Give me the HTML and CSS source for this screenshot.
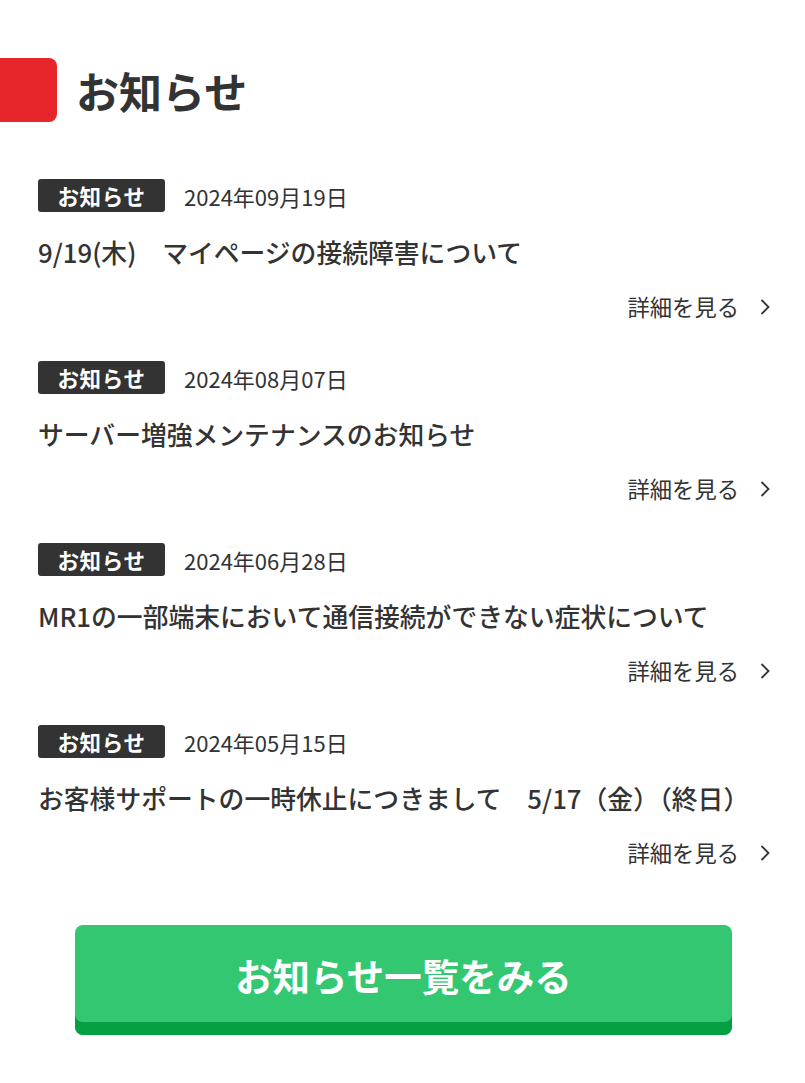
FILE: index.html
```html
<!DOCTYPE html>
<html lang="ja">
<head>
<meta charset="utf-8">
<title>お知らせ</title>
<link rel="stylesheet" href="styles.css">
</head>
<body>
<section class="news">
  <h2 class="news-heading"><span class="heading-mark"></span><span class="heading-text">お知らせ</span></h2>
  <ul class="news-list">
    <li class="news-item">
      <div class="news-meta"><span class="news-tag">お知らせ</span><span class="news-date">2024年09月19日</span></div>
      <p class="news-title">9/19(木)　マイページの接続障害について</p>
      <div class="news-more"><a class="more-link" href="#">詳細を見る<svg class="chev" width="10" height="16" viewBox="0 0 10 16"><polyline points="1.5,1 8.5,8 1.5,15" fill="none" stroke="#333" stroke-width="1.8"/></svg></a></div>
    </li>
    <li class="news-item">
      <div class="news-meta"><span class="news-tag">お知らせ</span><span class="news-date">2024年08月07日</span></div>
      <p class="news-title">サーバー増強メンテナンスのお知らせ</p>
      <div class="news-more"><a class="more-link" href="#">詳細を見る<svg class="chev" width="10" height="16" viewBox="0 0 10 16"><polyline points="1.5,1 8.5,8 1.5,15" fill="none" stroke="#333" stroke-width="1.8"/></svg></a></div>
    </li>
    <li class="news-item">
      <div class="news-meta"><span class="news-tag">お知らせ</span><span class="news-date">2024年06月28日</span></div>
      <p class="news-title">MR1の一部端末において通信接続ができない症状について</p>
      <div class="news-more"><a class="more-link" href="#">詳細を見る<svg class="chev" width="10" height="16" viewBox="0 0 10 16"><polyline points="1.5,1 8.5,8 1.5,15" fill="none" stroke="#333" stroke-width="1.8"/></svg></a></div>
    </li>
    <li class="news-item">
      <div class="news-meta"><span class="news-tag">お知らせ</span><span class="news-date">2024年05月15日</span></div>
      <p class="news-title">お客様サポートの一時休止につきまして　5/17（金）（終日）</p>
      <div class="news-more"><a class="more-link" href="#">詳細を見る<svg class="chev" width="10" height="16" viewBox="0 0 10 16"><polyline points="1.5,1 8.5,8 1.5,15" fill="none" stroke="#333" stroke-width="1.8"/></svg></a></div>
    </li>
  </ul>
  <div class="news-btn-wrap"><a class="news-btn" href="#">お知らせ一覧をみる</a></div>
</section>
</body>
</html>
```

FILE: styles.css
```css
* { box-sizing: border-box; }
html, body { margin: 0; padding: 0; background: #fff; }
body {
  font-family: "Noto Sans CJK JP", "Noto Sans", sans-serif;
  color: #333;
}
.news { padding: 58px 0 40px; }
.news-heading {
  display: flex;
  align-items: center;
  margin: 0 0 57px;
  gap: 19px;
}
.heading-mark {
  width: 57px;
  height: 64px;
  background: #e6262b;
  border-radius: 0 8px 8px 0;
  flex: none;
}
.heading-text {
  font-size: 43px;
  font-weight: 700;
  line-height: 1;
}
.news-list { list-style: none; margin: 0; padding: 0 35px 0 38px; }
.news-item { margin: 0 0 38px; }
.news-meta { display: flex; align-items: center; gap: 19px; margin-bottom: 20px; }
.news-tag {
  display: inline-flex;
  align-items: center;
  justify-content: center;
  width: 127px;
  height: 33px;
  background: #333;
  color: #fff;
  border-radius: 3px;
  font-size: 21.5px;
  font-weight: 700;
  letter-spacing: 0.03em;
}
.news-date { font-size: 22px; line-height: 1; }
.news-title {
  margin: 0 0 19px;
  font-size: 25.8px;
  font-weight: 500;
  line-height: 39px;
}
.news-more { display: flex; justify-content: flex-end; }
.more-link {
  display: inline-flex;
  align-items: center;
  gap: 21px;
  color: #333;
  text-decoration: none;
  font-size: 22.3px;
  line-height: 33px;
}
.chev { display: block; }
.news-btn-wrap { padding: 18px 73px 0 75px; }
.news-btn {
  display: flex;
  align-items: center;
  justify-content: center;
  height: 110px;
  padding-bottom: 12px;
  background: #33c772;
  border-radius: 8px;
  box-shadow: inset 0 -13px 0 #05a043;
  color: #fff;
  text-decoration: none;
  font-size: 37.5px;
  font-weight: 700;
}
```
